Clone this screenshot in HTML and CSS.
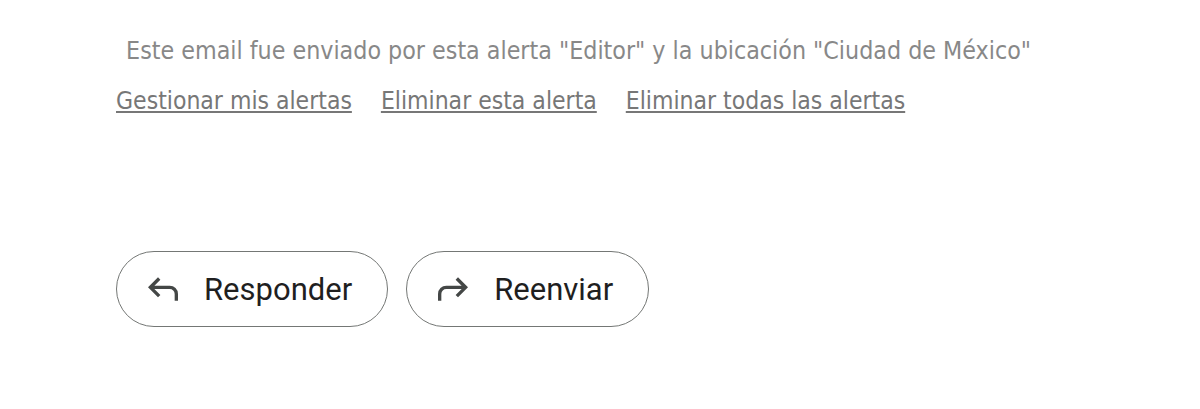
FILE: index.html
```html
<!DOCTYPE html>
<html>
<head>
<meta charset="utf-8">
<link rel="stylesheet" href="styles.css">
</head>
<body>
<div class="page">
  <p class="note">&nbsp;Este email fue enviado por esta alerta "Editor" y la ubicación "Ciudad de México"</p>
  <div class="links">
    <a href="#">Gestionar mis alertas</a>
    <a href="#">Eliminar esta alerta</a>
    <a href="#">Eliminar todas las alertas</a>
  </div>
  <div class="actions">
    <button class="btn">
      <svg width="40" height="40" viewBox="0 -960 960 960"><path d="M760-200v-160q0-50-35-85t-85-35H273l144 144-57 56-240-240 240-240 57 56-144 144h367q83 0 141.5 58.5T840-360v160h-80Z" fill="#444746"/></svg>
      <span>Responder</span>
    </button>
    <button class="btn">
      <svg width="40" height="40" viewBox="0 -960 960 960"><path d="M120-200v-160q0-83 58.5-141.5T320-560h367L543-704l57-56 240 240-240 240-57-56 144-144H320q-50 0-85 35t-35 85v160h-80Z" fill="#444746"/></svg>
      <span>Reenviar</span>
    </button>
  </div>
</div>
</body>
</html>
```
FILE: styles.css
```css
html, body { margin: 0; padding: 0; background: #fff; }
.page { padding: 36px 0 0 116px; }
.note {
  margin: 0;
  padding-left: 3px;
  font-family: "DejaVu Sans Condensed", "DejaVu Sans", sans-serif;
  font-size: 24.75px;
  line-height: 30px;
  color: #888;
}
.links {
  display: flex;
  gap: 29px;
  margin-top: 20px;
  font-family: "DejaVu Sans Condensed", "DejaVu Sans", sans-serif;
  font-size: 24.5px;
  line-height: 30px;
}
.links a { color: #777; text-decoration: underline; }
.actions {
  display: flex;
  gap: 18px;
  margin-top: 135px;
}
.btn {
  display: flex;
  align-items: center;
  gap: 21px;
  height: 76px;
  padding: 0 35px 0 26px;
  border: 1px solid #747775;
  border-radius: 38px;
  background: #fff;
  font-family: Roboto, "Noto Sans", sans-serif;
  font-size: 31px;
  color: #1f1f1f;
}
.btn svg { display: block; }
```
